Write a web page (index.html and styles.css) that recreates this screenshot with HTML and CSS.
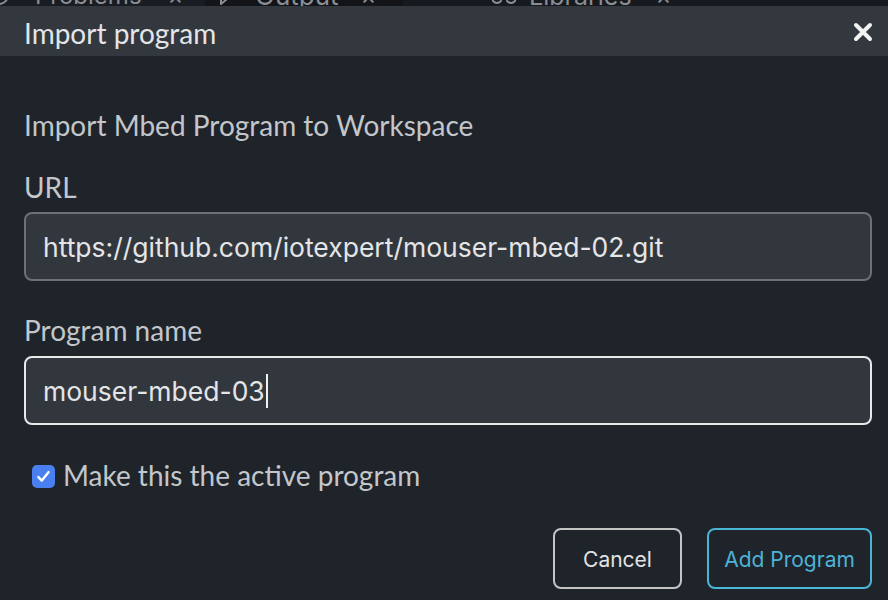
FILE: index.html
```html
<!DOCTYPE html>
<html>
<head>
<meta charset="utf-8">
<link rel="stylesheet" href="styles.css">
</head>
<body>
<div class="tabs">
  <div class="tab tab-a">
    <svg class="tab-icon icon-a" width="22" height="22" viewBox="0 0 22 22"><circle cx="11" cy="11" r="9" fill="none" stroke="#8a8e94" stroke-width="2"/></svg>
    <span class="tab-label label-a">Problems</span><span class="tab-x x-a">×</span>
  </div>
  <div class="tab tab-b">
    <svg class="tab-icon icon-b" width="30" height="22" viewBox="0 0 30 22"><path d="M3 3 H27 V15 H12 L6 20 V15 H3 Z" fill="none" stroke="#8a8e94" stroke-width="2" stroke-linejoin="round"/></svg>
    <span class="tab-label label-b">Output</span><span class="tab-x x-b">×</span>
  </div>
  <div class="tab tab-c">
    <svg class="tab-icon icon-c" width="30" height="22" viewBox="0 0 30 22"><path d="M4 17 Q8 21 12 17 M18 17 Q22 21 26 17 M4 17 V5 M26 17 V5" fill="none" stroke="#8a8e94" stroke-width="2" stroke-linecap="round"/></svg>
    <span class="tab-label label-c">Libraries</span><span class="tab-x x-c">×</span>
  </div>
</div>
<div class="dialog">
  <div class="header">
    <span class="title">Import program</span>
    <svg class="close" width="20" height="20" viewBox="0 0 20 20"><path d="M3 3 L17 17 M17 3 L3 17" stroke="#f2f2f2" stroke-width="4" stroke-linecap="round"/></svg>
  </div>
  <div class="body">
    <div class="subtitle">Import Mbed Program to Workspace</div>
    <label class="label label-url">URL</label>
    <div class="input">https://github.com/iotexpert/mouser-mbed-02.git</div>
    <label class="label label-name">Program name</label>
    <div class="input focused">mouser-mbed-03<span class="caret"></span></div>
    <div class="check-row">
      <span class="checkbox"><svg width="17" height="17" viewBox="0 0 16 16"><path d="M3.2 8.6 L6.4 11.8 L12.7 3.9" fill="none" stroke="#fff" stroke-width="2.3" stroke-linecap="round" stroke-linejoin="round"/></svg></span>
      <span class="check-label">Make this the active program</span>
    </div>
    <div class="actions">
      <div class="btn btn-cancel">Cancel</div>
      <div class="btn btn-primary">Add Program</div>
    </div>
  </div>
</div>
</body>
</html>
```
FILE: styles.css
```css
html, body {
  margin: 0;
  padding: 0;
  background: #1f242b;
  width: 888px;
  height: 600px;
  overflow: hidden;
}
.tabs {
  height: 6px;
  overflow: hidden;
  display: flex;
  align-items: flex-start;
  background: #181b1f;
  font-family: Inter, "Liberation Sans", sans-serif;
  font-size: 24px;
  color: #8a8e94;
  white-space: nowrap;
}
.tab {
  height: 6px;
  overflow: hidden;
  display: flex;
  align-items: flex-start;
}
.tab-a { width: 205px; background: #191c20; }
.tab-b { width: 198px; background: #121417; }
.tab-c { flex: 1; background: #16191d; }
.tab-icon {
  flex: none;
  margin-top: -16px;
}
.tab-label, .tab-x {
  line-height: 24px;
  margin-top: -16px;
}
.icon-a { margin-left: -12px; }
.label-a { margin-left: 25px; }
.x-a { margin-left: 26px; }
.icon-b { margin-left: 10px; }
.label-b { margin-left: 10px; font-size: 26px; }
.x-b { margin-left: 22px; }
.icon-c { margin-left: 86px; }
.label-c { margin-left: 10px; font-size: 25px; }
.x-c { margin-left: 24px; }
.dialog {
  font-family: Lato, "Liberation Sans", sans-serif;
}
.header {
  height: 50px;
  box-sizing: border-box;
  background: #32383e;
  display: flex;
  align-items: flex-start;
  justify-content: space-between;
  padding: 11px 15px 0 24px;
}
.title {
  font-size: 28px;
  line-height: 32px;
  color: #e3e5e8;
}
.close {
  display: block;
  margin-top: 5px;
}
.body {
  padding: 53px 16px 0 24px;
  display: flex;
  flex-direction: column;
}
.subtitle, .label, .check-label {
  font-size: 28px;
  line-height: 32px;
  color: #c3c6ca;
}
.label-url { margin-top: 30px; margin-bottom: 9px; }
.label-name { margin-top: 33px; margin-bottom: 10px; }
.input {
  height: 69px;
  box-sizing: border-box;
  border: 2px solid #6c7077;
  border-radius: 8px;
  background: #32373e;
  padding: 0 17px;
  display: flex;
  align-items: center;
  font-family: Inter, "Liberation Sans", sans-serif;
  font-size: 26.5px;
  color: #e4e5e7;
}
.input.focused { border-color: #e9e9e9; }
.caret {
  display: inline-block;
  width: 2px;
  height: 34px;
  background: #f0f0f0;
  margin-left: 1px;
}
.check-row {
  display: flex;
  align-items: flex-start;
  margin-top: 34px;
  margin-left: 8px;
  gap: 8px;
}
.checkbox {
  flex: none;
  width: 23px;
  height: 23px;
  margin-top: 6px;
  border-radius: 5px;
  background: #4a7ff0;
  display: flex;
  align-items: center;
  justify-content: center;
}
.actions {
  display: flex;
  justify-content: flex-end;
  gap: 25px;
  margin-top: 37px;
}
.btn {
  height: 61px;
  box-sizing: border-box;
  border-radius: 8px;
  display: flex;
  align-items: center;
  justify-content: center;
  padding-top: 2px;
  font-family: Inter, "Liberation Sans", sans-serif;
  font-size: 21px;
}
.btn-cancel {
  width: 129px;
  border: 2px solid #c4c4c4;
  color: #e2e2e2;
}
.btn-primary {
  width: 165px;
  border: 2px solid #4ab5d6;
  color: #4eb3d8;
}
```
